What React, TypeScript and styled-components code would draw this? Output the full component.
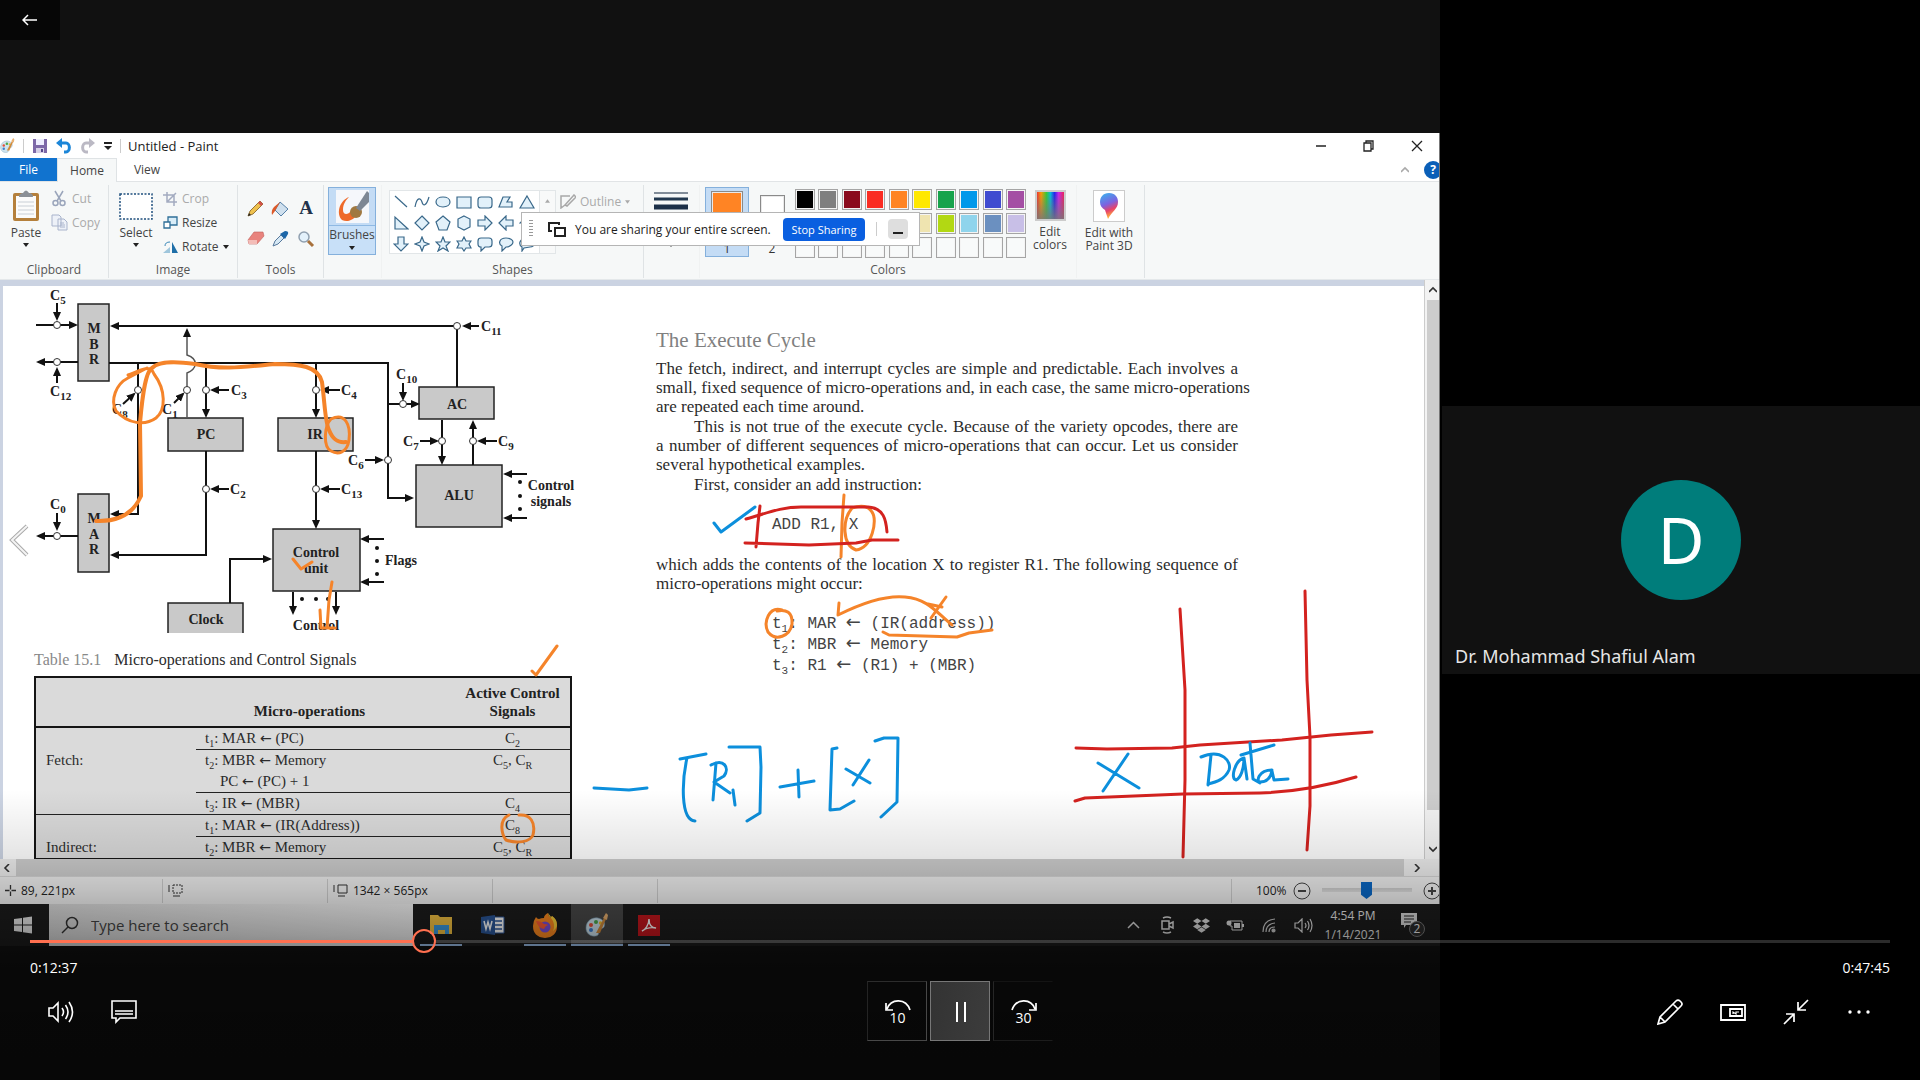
import React, { useState } from "react";
import styled, { createGlobalStyle } from "styled-components";
import { FaDropbox } from "react-icons/fa";

const UI = `"Open Sans", "Noto Sans", sans-serif`;
const SERIF = `"Liberation Serif", serif`;
const MONO = `"Liberation Mono", monospace`;
const ORANGE = "#f5842a";
const RED = "#d3221f";
const BLUE = "#0c8fdc";

const Global = createGlobalStyle`
  * { box-sizing: border-box; }
  body { margin: 0; background: #000; font-family: ${UI}; }
  button, input { font: inherit; color: inherit; }
  button { border: 0; padding: 0; background: none; cursor: pointer; }
  svg { display: block; }
`;

/* ---------- player shell ---------- */
const Player = styled.main`
  position: relative;
  min-height: 100vh;
  display: grid;
  grid-template-columns: 3fr 1fr;
  background: #000;
  overflow: hidden;
`;
const Share = styled.section`
  display: flex;
  flex-direction: column;
  justify-content: center;
  padding-bottom: 1px;
  background: #111;
  min-width: 0;
`;
const People = styled.aside`
  display: flex;
  align-items: center;
  padding-left: 2px;
`;
const Tile = styled.div`
  position: relative;
  width: 100%;
  aspect-ratio: 16 / 9;
  display: grid;
  place-items: center;
  background: #111;
`;
const Avatar = styled.div`
  width: 120px;
  height: 120px;
  border-radius: 50%;
  display: grid;
  place-items: center;
  background: #007d7b;
  color: #fff;
  font: 400 64px/120px "Noto Sans", sans-serif;
`;
const Person = styled.div`
  position: absolute;
  left: 13px;
  bottom: 4px;
  color: #e6e6e6;
  font: 18px/28px "Noto Sans", sans-serif;
`;
const Back = styled.button`
  position: absolute;
  left: 0;
  top: 0;
  width: 60px;
  height: 40px;
  display: grid;
  place-items: center;
  background: #060606;
  color: #fff;
`;

/* ---------- paint window ---------- */
const Paint = styled.div`
  position: relative;
  background: #fff;
  color: #333;
  font-size: 12px;
  border-right: 1px solid #777;
`;
const TitleBar = styled.header`
  height: 25px;
  display: flex;
  align-items: center;
  color: #222;
  font-size: 13px;
`;
const Quick = styled.div`
  display: flex;
  align-items: center;
  gap: 8px;
  margin-right: 7px;
`;
const Rule = styled.i`
  width: 1px;
  height: 14px;
  background: #ccc;
`;
const WindowButtons = styled.div`
  margin: 0 -2px 0 auto;
  display: flex;
  button { width: 48px; height: 25px; display: grid; place-items: center; }
`;
const Tabs = styled.nav`
  height: 24px;
  display: flex;
  align-items: stretch;
  border-bottom: 1px solid #e1e4e6;
`;
const Tab = styled.button<{ $kind?: "file" | "on" }>`
  width: ${(p) => (p.$kind === "file" ? 57 : 60)}px;
  color: ${(p) => (p.$kind === "file" ? "#fff" : "#444")};
  background: ${(p) => (p.$kind === "file" ? "#1173cf" : p.$kind === "on" ? "#f6f8f8" : "none")};
  border: ${(p) => (p.$kind === "on" ? "1px solid #dfe3e5" : "0")};
  border-bottom: 0;
  margin-bottom: ${(p) => (p.$kind === "on" ? "-1px" : "0")};
  font-size: 12px;
`;
const TabTail = styled.div`
  margin-left: auto;
  display: flex;
  align-items: center;
  gap: 15px;
  overflow: hidden;
`;
const Help = styled.button`
  width: 18px;
  height: 18px;
  margin-right: -3px;
  border-radius: 50%;
  background: #0a5fb8;
  color: #fff;
  font-weight: 700;
  font-size: 12px;
  line-height: 18px;
`;
const Ribbon = styled.div`
  height: 98px;
  display: flex;
  background: #f6f8f8;
  border-bottom: 1px solid #e4e8ea;
`;
const Group = styled.section<{ $w: number; $line?: boolean }>`
  width: ${(p) => p.$w}px;
  height: 93px;
  margin-top: 3px;
  padding-top: 2px;
  display: flex;
  flex-direction: column;
  justify-content: space-between;
  align-items: center;
  border-right: 1px solid ${(p) => (p.$line === false ? "#f0f2f2" : "#dfe3e5")};
  flex: none;
`;
const GroupBody = styled.div<{ $gap?: number; $pad?: string }>`
  width: 100%;
  display: flex;
  align-items: flex-start;
  gap: ${(p) => p.$gap ?? 4}px;
  padding: ${(p) => p.$pad ?? "0"};
`;
const GroupName = styled.h2`
  margin: 0;
  font-size: 12px;
  font-weight: 400;
  line-height: 16px;
  color: #555;
`;
const Big = styled.button<{ $on?: boolean; $w?: number }>`
  width: ${(p) => p.$w ?? 48}px;
  height: 68px;
  padding-top: 3px;
  display: flex;
  flex-direction: column;
  align-items: center;
  line-height: 13px;
  gap: ${(p) => (p.$on ? 5 : 4)}px;
  color: #444;
  background: ${(p) => (p.$on ? "linear-gradient(#c4dcf5 38px, #8fb9e3 38px, #8fb9e3 39px, #c8e0f8 39px)" : "none")};
  box-shadow: ${(p) => (p.$on ? "inset 0 0 0 1px #84b0dc" : "none")};
  flex: none;
`;
const Stack = styled.div`
  display: flex;
  flex-direction: column;
  gap: 1px;
`;
const Small = styled.button<{ $off?: boolean }>`
  height: 23px;
  display: flex;
  align-items: center;
  gap: 4px;
  color: ${(p) => (p.$off ? "#aaa" : "#444")};
  white-space: nowrap;
`;
const ToolGrid = styled.div`
  display: grid;
  grid-template-columns: repeat(3, 25px);
  grid-auto-rows: 30px;
  place-items: center;
  svg { overflow: visible; }
`;
const Gallery = styled.div`
  display: flex;
  height: 64px;
  background: #fff;
  border: 1px solid #e2e6e8;
`;
const ShapeGrid = styled.div`
  display: grid;
  grid-template-columns: repeat(7, 21px);
  grid-auto-rows: 21px;
  place-items: center;
  padding-right: 2px;
  border-right: 1px solid #e2e6e8;
`;
const GalleryMore = styled.div`
  width: 15px;
  padding-top: 8px;
  display: flex;
  justify-content: center;
  background: #f8f9f9;
`;
const ColorButton = styled.button<{ $on?: boolean }>`
  width: ${(p) => (p.$on ? 44 : 30)}px;
  height: 70px;
  padding: 4px 0 0;
  display: flex;
  flex-direction: column;
  align-items: center;
  justify-content: space-between;
  background: ${(p) => (p.$on ? "#c4dcf5" : "none")};
  box-shadow: ${(p) => (p.$on ? "inset 0 0 0 1px #84b0dc" : "none")};
`;
const ColorChip = styled.i<{ $c: string; $s: number }>`
  width: ${(p) => p.$s}px;
  height: ${(p) => p.$s}px;
  margin-top: ${(p) => (p.$s < 30 ? 4 : 0)}px;
  background: ${(p) => p.$c};
  border: 1px solid #8a8a8a;
  box-shadow: inset 0 0 0 1px #e9e9e9;
`;
const Palette = styled.div`
  width: 231px;
  display: grid;
  grid-template-columns: repeat(10, 20px);
  justify-content: space-between;
  row-gap: 3px;
  padding-top: 2px;
`;
const Swatch = styled.button<{ $c: string }>`
  height: 21px;
  background: ${(p) => p.$c};
  border: 1px solid #a5a5a5;
  box-shadow: inset 0 0 0 1px #f4f4f4;
`;
const Spectrum = styled.i`
  width: 31px;
  height: 31px;
  border: 2px solid #ccc;
  background: linear-gradient(transparent, #777d),
    linear-gradient(90deg, #e33, #f90 15%, #3c3 35%, #0bd 50%, #22e 65%, #c2e 80%, #e25);
`;
const Banner = styled.div`
  position: absolute;
  left: 521px;
  top: 79px;
  width: 399px;
  height: 34px;
  display: flex;
  align-items: center;
  padding: 0 11px 0 7px;
  background: #fff;
  border: 1px solid #b5b5b5;
  color: #1c1c1c;
  font-weight: 500;
`;
const Grip = styled.i`
  width: 4px;
  height: 18px;
  margin-right: 15px;
  background: repeating-linear-gradient(#999 0 1px, transparent 1px 3px);
`;
const BannerText = styled.span`
  flex: 1;
  margin-left: 9px;
  font-size: 12px;
  white-space: nowrap;
`;
const Stop = styled.button`
  width: 82px;
  height: 23px;
  border-radius: 4px;
  background: #0a5fe0;
  color: #fff;
  font-size: 11px;
  margin-right: 11px;
`;
const MiniBtn = styled.button`
  width: 20px;
  height: 20px;
  margin-left: 11px;
  border-radius: 4px;
  background: #dedede;
  display: grid;
  place-items: center;
`;

/* ---------- canvas ---------- */
const Workspace = styled.div`
  height: 579px;
  display: flex;
  background: #cbd3e2;
`;
const Sheet = styled.div`
  position: relative;
  flex: 1;
  min-width: 0;
  margin: 6px 0 0 3px;
  display: flex;
  background: #fff;
  overflow: hidden;
`;
const Figures = styled.div`
  width: 597px;
  flex: none;
`;
const Prose = styled.article`
  width: 582px;
  margin-left: 56px;
  padding-top: 42px;
  flex: none;
  font: 17px/19px ${SERIF};
  color: #2b2b2b;
  h3 { margin: 0 0 7px; font-size: 21px; line-height: 24px; font-weight: 400; color: #808080; }
  p { margin: 0 0 1px; }
`;
const Line = styled.span<{ $indent?: boolean; $last?: boolean }>`
  display: block;
  white-space: nowrap;
  padding-left: ${(p) => (p.$indent ? 38 : 0)}px;
  text-align-last: ${(p) => (p.$last ? "left" : "justify")};
`;
const Code = styled.pre`
  margin: 0;
  padding: 20px 0 19px 116px;
  font: 16px/21px ${MONO};
  color: #444;
  sub { font-size: 11px; line-height: 0; }
`;
const LeftArrow = styled.span<{ $s: number }>`
  font: ${(p) => p.$s}px/1px "DejaVu Sans", sans-serif;
`;
const Table = styled.table`
  width: 538px;
  margin-left: 31px;
  border-collapse: collapse;
  table-layout: fixed;
  background: #dadada;
  border: 2px solid #151515;
  font: 15px/21px ${SERIF};
  color: #2b2b2b;
  caption { text-align: left; font-size: 16px; line-height: 24px; padding-bottom: 4px; margin-top: 15px; }
  caption b { color: #888; margin-right: 9px; font-weight: 400; }
  sub { font-size: 10px; line-height: 0; }
  th { vertical-align: bottom; line-height: 18px; padding: 6px 0; height: 48px; border-bottom: 2px solid #151515; color: #222; }
  th:nth-child(2) { padding-right: 32px; }
  td { padding: 0; height: 21px; white-space: pre; }
  td:first-child { padding-left: 10px; }
`;
const Cell = styled.td<{ $line?: boolean; $mid?: boolean }>`
  && { padding-left: ${(p) => (p.$mid ? 0 : 9)}px; }
  text-align: ${(p) => (p.$mid ? "center" : "left")};
  border-bottom: ${(p) => (p.$line ? "1px solid #222" : "0")};
`;
const Ink = styled.svg`
  position: absolute;
  left: 0;
  top: 0;
  fill: none;
  stroke-width: 3;
  stroke-linecap: round;
  stroke-linejoin: round;
`;
const VScroll = styled.div`
  width: 15px;
  display: flex;
  flex-direction: column;
  align-items: center;
  justify-content: space-between;
  padding: 6px 0 6px 2px;
  background: #f3f3f3;
  border-left: 1px solid #ccc;
`;
const VThumb = styled.i`
  width: 12px;
  flex: 1;
  margin: 6px 0 35px;
  background: #cdcdcd;
`;
const HScroll = styled.div`
  height: 17px;
  display: flex;
  align-items: center;
  justify-content: space-between;
  gap: 5px;
  padding: 0 18px 0 3px;
  background: #ededed;
`;
const HThumb = styled.i`
  flex: 1;
  height: 17px;
  margin-right: 4px;
  background: #cdcdcd;
`;
const Status = styled.footer`
  height: 28px;
  display: flex;
  align-items: center;
  background: #efefef;
  border-top: 1px solid #d5d5d5;
  color: #222;
`;
const StatusCell = styled.div<{ $w?: number }>`
  width: ${(p) => (p.$w ? p.$w + "px" : "auto")};
  flex: ${(p) => (p.$w ? "none" : 1)};
  height: 24px;
  padding-left: 5px;
  display: flex;
  align-items: center;
  gap: 5px;
  border-right: 1px solid #ccc;
`;
const Zoom = styled.div`
  width: 207px;
  padding-left: 24px;
  display: flex;
  align-items: center;
  gap: 6px;
  overflow: hidden;
  svg { flex: none; }
  input {
    appearance: none; width: 90px; height: 17px; margin: 0 5px; background: linear-gradient(transparent 6px, #ccc 6px, #ddd 10px, transparent 10px); flex: none;
  }
  input::-webkit-slider-thumb {
    appearance: none; width: 11px; height: 17px; background: #0a66c2;
    clip-path: polygon(0 0, 100% 0, 100% 75%, 50% 100%, 0 75%);
  }
`;

/* ---------- taskbar ---------- */
const Taskbar = styled.div`
  height: 42px;
  display: flex;
  align-items: stretch;
  background: #1c1c1c;
  color: #e8e8e8;
`;
const Start = styled.button`
  width: 49px;
  padding-right: 3px;
  display: grid;
  place-items: center;
`;
const Search = styled.label`
  width: 364px;
  margin-right: 2px;
  display: flex;
  align-items: center;
  gap: 12px;
  padding-left: 12px;
  background: linear-gradient(90deg, #d8d8d8, #f4f4f4);
  color: #333;
  input { border: 0; background: none; outline: 0; width: 250px; font-size: 15px; padding: 0; }
  input::placeholder { color: #444; opacity: 1; }
`;
const AppButton = styled.button<{ $on?: boolean; $bar?: number }>`
  width: 52px;
  display: grid;
  place-items: center;
  background: ${(p) => (p.$on ? "#484848" : "none")};
  background-image: ${(p) => (p.$bar ? "linear-gradient(#9fc3ef, #9fc3ef)" : "none")};
  background-size: ${(p) => p.$bar ?? 0}px 2px;
  background-position: 50% 100%;
  background-repeat: no-repeat;
`;
const Tray = styled.div`
  margin-left: auto;
  display: flex;
  align-items: center;
  padding-right: 14px;
`;
const TrayIcon = styled.button`
  width: 34px;
  display: grid;
  place-items: center;
`;
const Clock = styled.div`
  width: 66px;
  text-align: center;
  font-size: 12px;
  line-height: 19px;
  margin-right: 14px;
`;

/* ---------- player controls ---------- */
const Shade = styled.div`
  position: absolute;
  left: 0;
  right: 0;
  bottom: 0;
  height: 290px;
  display: flex;
  flex-direction: column;
  justify-content: flex-end;
  padding: 0 30px 39px;
  color: #fff;
  background: linear-gradient(#0000, #0000001a 65px, #0003 100px, #0000005c 145px, #0008 180px, #0009);
`;
const Seek = styled.input<{ $at: number }>`
  appearance: none;
  width: 100%;
  height: 24px;
  margin: 0;
  background: linear-gradient(
      90deg,
      #ff7050 calc(${(p) => p.$at}% - 5px),
      transparent calc(${(p) => p.$at}% - 5px) calc(${(p) => p.$at}% + 17px),
      #ffffff2b calc(${(p) => p.$at}% + 17px)
    )
    0 50% / 100% 3px no-repeat;
  &::-webkit-slider-thumb {
    appearance: none;
    width: 24px;
    height: 24px;
    border: 2px solid #ff7050;
    border-radius: 50%;
    background: transparent;
  }
`;
const Times = styled.div`
  display: flex;
  justify-content: space-between;
  font-size: 14px;
  line-height: 20px;
  padding: 5px 0 3px;
`;
const Controls = styled.div`
  display: grid;
  grid-template-columns: 1fr auto 1fr;
`;
const Bar = styled.div<{ $end?: boolean }>`
  display: flex;
  gap: 3px;
  padding: ${(p) => (p.$end ? "0 2px 0 0" : "0")};
  justify-content: ${(p) => (p.$end ? "flex-end" : "flex-start")};
`;
const Ctl = styled.button<{ $look?: "edge" | "on" | "fade" }>`
  width: 60px;
  height: 60px;
  padding: 2px 0 0 1px;
  display: grid;
  place-items: center;
  color: #fff;
  font-size: 14px;
  border: 1px solid transparent;
  border-color: ${(p) => (p.$look === "on" ? "#777" : p.$look === "edge" ? "#2c2c2c #484848 #484848 #242424" : p.$look === "fade" ? "#141414 transparent #1c1c1c #262626" : "transparent")};
  background: ${(p) => (p.$look === "on" ? "linear-gradient(100deg, #333, #3c3c3c)" : "none")};
`;
const SkipText = styled.span`
  display: flex;
  flex-direction: column;
  align-items: center;
  line-height: 14px;
`;
const PrevMark = styled.svg`
  position: absolute;
  left: 9px;
  top: 391px;
`;

/* ---------- small icons ---------- */
const Caret = ({ c = "#222", s = 6 }: { c?: string; s?: number }) => (
  <svg width={s} height="4" viewBox="0 0 6 4"><path d="M0 0h6L3 4z" fill={c} /></svg>
);
const Chev = ({ d, c = "#333", s = 8 }: { d: string; c?: string; s?: number }) => (
  <svg width={s} height={s} viewBox="0 0 8 8"><path d={d} fill="none" stroke={c} strokeWidth="1.6" /></svg>
);
const PaletteIcon = ({ s = 24 }: { s?: number }) => (
  <svg width={s} height={s} viewBox="0 0 24 24">
    <path d="M1 15C1 8 7 4 13 5c5 1 8 5 6 9-1 2-4 1-5 3s1 5-3 6C5 24 1 20 1 15z" fill="#cfe3ee" stroke="#7aa0b8" strokeWidth=".6" />
    <circle cx="6" cy="12" r="2" fill="#e5503a" /><circle cx="11" cy="9" r="2" fill="#4aa84e" />
    <circle cx="15.500" cy="10" r="1.700" fill="#f0c030" /><circle cx="6" cy="17" r="2" fill="#3f7fd0" />
    <path d="M11 20 19 5l2 1-6 14z" fill="#d08a3c" /><path d="M18 5l3-5 2 2-1 5z" fill="#e8b070" />
  </svg>
);

const shapes = [
  "M2 2 14 13", "M1 13C3 2 7 4 8 8s4 5 7-5", "M8 3c4 0 7 2 7 5s-3 5-7 5-7-2-7-5 3-5 7-5z", "M1 3h14v11H1z",
  "M4 3h8q3 0 3 3v5q0 3-3 3H4q-3 0-3-3V6q0-3 3-3z", "M5 3h7L9 8h5v5H1z", "M8 2l7 12H1z",
  "M2 2v12h13z", "M8 1l7 7-7 7-7-7z", "M8 1l7 6-3 8H4L1 7z", "M8 1l6 3v8l-6 3-6-3V4z",
  "M1 5h7V1l7 7-7 7v-4H1z", "M15 5H8V1L1 8l7 7v-4h7z", "M5 15V8H1l7-7 7 7h-4v7z",
  "M5 1v7H1l7 7 7-7h-4V1z", "M8 1l2 5 5 2-5 2-2 5-2-5-5-2 5-2z", "M8 1l2 5h5l-4 4 2 5-5-3-5 3 2-5-4-4h5z",
  "M8 1l2 4h5l-2 3 2 4h-5l-2 3-2-3H1l2-4-2-3h5z", "M4 2h8q3 0 3 3v3q0 3-3 3H8l-4 4v-4q-3 0-3-3V5q0-3 3-3z",
  "M8 2c4 0 7 2 7 4s-3 5-7 5l-4 4v-5C0 8 1 2 8 2z", "M5 3q3-3 6 0 4 0 4 4t-4 4l-6 1-2 3v-4Q0 9 1 6t4-3z",
];
const row1 = ["#000", "#7f7f7f", "#8a0a1c", "#fa2c22", "#ff8424", "#ffe800", "#16a34c", "#0098ea", "#3f4bd0", "#a44ea4"];
const row2 = ["#fff", "#c3c3c3", "#b97a57", "#ffaec9", "#ffc90e", "#efe4b0", "#b2d813", "#8fd4ec", "#6b90c0", "#c8bfe7"];
const row3 = Array(10).fill("#f8fafa");

/* ---------- CPU data path figure ---------- */
const Sub = ({ x, y, n, c = "#222" }: { x: number; y: number; n: string; c?: string }) => (
  <text x={x} y={y + 5} fontSize="14" fill={c}>C<tspan dy="4" fontSize="11">{n}</tspan></text>
);
const boxes: [number, number, number, number][] = [
  [78, 304, 31, 77], [168, 418, 75, 33], [278, 418, 75, 33], [419, 387, 75, 32],
  [416, 465, 86, 62], [273, 529, 87, 62], [78, 494, 31, 78],
];
const wires = [
  "M36 325H76", "M78 362H38", "M457 326H112", "M109 363H388V498H412",
  "M388 404H418", "M138 363V514H112", "M206 363V416", "M206 451V555H112", "M316 363V416", "M316 451V527",
  "M442 420V463", "M473 465V422", "M230 603V559H270", "M293 592V613", "M336 592V613", "M78 536H38",
];
const pointers = [
  "M57 303V319", "M57 383V369", "M479 326H464", "M403 383V399", "M365 460H382", "M123 404 134 394",
  "M174 403 183 394", "M229 390H212", "M229 489H212", "M340 390H322", "M340 489H322", "M420 441H437",
  "M497 441H479", "M527 474H505", "M527 518H505", "M384 539H362", "M384 582H362", "M57 513V529",
];
const nodes: [number, number][] = [
  [57, 325], [57, 362], [457, 326], [403, 404], [388, 460], [138, 390], [187, 390], [206, 390], [206, 489],
  [316, 390], [316, 489], [442, 441], [473, 441], [57, 536],
];
const dots: [number, number][] = [
  [520, 482], [520, 496], [520, 509], [377, 548], [377, 561], [377, 574], [302, 599], [316, 599], [328, 599],
];
const Figure = () => (
  <svg width="597" height="347" viewBox="3 286 597 347" fontFamily={SERIF} fontWeight="700" role="img" aria-label="Data paths and control signals">
    <defs>
      <marker id="tip" markerUnits="userSpaceOnUse" markerWidth="9" markerHeight="8" refX="7" refY="4" orient="auto">
        <path d="M0 0 9 4 0 8z" fill="#111" />
      </marker>
    </defs>
    {boxes.map((b) => <rect key={b.join()} x={b[0]} y={b[1]} width={b[2]} height={b[3]} fill="#c9c9c9" stroke="#222" strokeWidth="1.5" />)}
    <path d="M168 634V603H243V634" fill="#c9c9c9" stroke="#222" strokeWidth="1.5" />
    <path d="M187 418V373C197 369 199 359 187 355V330" fill="none" stroke="#555" strokeWidth="1.5" markerEnd="url(#tip)" />
    <path d="M457 329V387" stroke="#111" strokeWidth="2" />
    {wires.map((d) => <path key={d} d={d} fill="none" stroke="#111" strokeWidth="2" markerEnd="url(#tip)" />)}
    {pointers.map((d) => <path key={d} d={d} stroke="#111" strokeWidth="2" markerEnd="url(#tip)" />)}
    {nodes.map((n) => <circle key={n.join()} cx={n[0]} cy={n[1]} r="3.500" fill="#fff" stroke="#333" />)}
    {dots.map((n) => <circle key={n.join()} cx={n[0]} cy={n[1]} r="2" fill="#111" />)}
    <Sub x={50} y={295} n="5" /><Sub x={50} y={391} n="12" /><Sub x={481} y={326} n="11" />
    <Sub x={396} y={374} n="10" /><Sub x={348} y={460} n="6" /><Sub x={112} y={409} n="8" />
    <Sub x={162} y={409} n="1" /><Sub x={231} y={390} n="3" /><Sub x={230} y={489} n="2" />
    <Sub x={341} y={390} n="4" /><Sub x={341} y={489} n="13" /><Sub x={403} y={441} n="7" />
    <Sub x={498} y={441} n="9" /><Sub x={50} y={504} n="0" />
    <g fontSize="14" fill="#222" textAnchor="middle">
      <text x="94" y="333">M</text><text x="94" y="349">B</text><text x="94" y="364">R</text>
      <text x="94" y="523">M</text><text x="94" y="539">A</text><text x="94" y="554">R</text>
      <text x="206" y="439">PC</text><text x="315" y="439">IR</text><text x="457" y="409">AC</text>
      <text x="459" y="500">ALU</text><text x="316" y="557">Control</text><text x="316" y="573">unit</text>
      <text x="206" y="624">Clock</text><text x="316" y="630">Control</text>
      <text x="401" y="565">Flags</text><text x="551" y="490">Control</text><text x="551" y="506">signals</text>
    </g>
  </svg>
);

const Handwriting = () => (
  <Ink width="1421" height="573" viewBox="3 286 1421 573" aria-hidden="true">
    <g stroke={ORANGE}>
      <path d="M96 521C120 522 134 512 141 496L140 423C142 400 145 372 152 368 160 360 180 362 195 364 225 371 250 366 275 364 300 364 318 366 322 382 325 405 325 422 329 430 333 440 338 443 346 442" strokeWidth="4" />
      <path d="M128 375C142 370 150 364 154 374 166 390 166 410 156 418 145 426 128 424 116 411 110 400 116 384 128 378L147 368" />
      <path d="M331 419C345 412 351 425 349 440 347 453 338 455 331 451 323 447 324 426 331 419z" />
      <path d="M293 559 301 569 312 562M332 582 329 600 327 628M320 610 321 628H335M532 671 536 675 557 646" />
      <path d="M509 815C498 820 502 835 506 840 517 844 530 842 533 835 536 822 530 814 519 815" />
      <path d="M844 495 842 523 841 557M852 508C842 520 842 545 856 550 872 548 878 520 872 512 867 504 858 506 852 508" />
      <path d="M782 610C769 606 763 622 768 632 776 642 790 636 792 624 793 612 786 609 777 611" />
      <path d="M839 603 838 615C862 603 885 595 905 597 928 599 936 612 952 625M946 597 931 618M928 604 942 607M883 632 889 635 957 637 969 633 992 630" />
    </g>
    <g stroke={RED}>
      <path d="M746 519C765 514 780 507 801 507H868C884 508 886 520 887 532M760 506 758 523 756 547M745 543 809 545 856 543 872 540H898" />
      <path d="M1180 609 1185 690V780L1183 857M1305 591 1307 680 1310 737V806L1307 850" />
      <path d="M1076 748 1107 749 1172 748 1200 745 1282 740 1331 735 1372 732M1075 801 1085 798 1183 794 1260 793C1290 792 1320 788 1356 777" />
    </g>
    <g stroke={BLUE}>
      <path d="M714 523 721 532 755 507M594 788 629 790 647 788M706 754 680 759M687 758C682 780 680 820 695 821" />
      <path d="M716 763 713 800M711 765C724 758 730 768 724 776L714 782 730 793M733 790 735 805M729 747H760L761 767 760 813 747 821" />
      <path d="M780 787 814 781M798 770 799 797M837 748 832 749 830 810 840 809 854 801M846 769 870 783M869 760 853 785M875 741 884 738H898L897 802 881 817" />
      <path d="M1098 763 1139 788M1128 754 1103 791M1211 755 1208 785M1201 757C1222 748 1232 762 1229 770 1225 779 1217 782 1208 784" />
      <path d="M1244 758C1235 760 1230 779 1236 780 1241 778 1244 768 1244 758L1247 779M1250 743 1253 779 1260 783M1241 755 1274 745M1272 770C1258 770 1256 782 1260 782 1268 782 1271 776 1272 771L1274 780 1288 779" />
    </g>
  </Ink>
);

const Arrow = ({ s = 18 }: { s?: number }) => <> <LeftArrow $s={s}>←</LeftArrow> </>;

export default function App() {
  const [pos, setPos] = useState(20.8);
  return (
    <>
      <Global />
      <Player>
        <Share>
          <Paint>
            <TitleBar>
              <Quick>
                <PaletteIcon s={15} />
                <Rule />
                <svg width="16" height="16" viewBox="0 0 16 16"><path d="M1 1h14v14H1z" fill="#7d68a8" /><path d="M4 1h8v6H4z" fill="#eef" /><path d="M4 10h8v5H4z" fill="#d5cfe6" /><path d="M9 11h2v3H9z" fill="#554488" /></svg>
                <svg width="16" height="16" viewBox="0 0 16 16"><path d="M3 5h7a3 4 0 0 1 0 9H8" fill="none" stroke="#1c86d8" strokeWidth="3" /><path d="M0 5 6 0v10z" fill="#1c86d8" /></svg>
                <svg width="16" height="16" viewBox="0 0 16 16"><path d="M12 5H6a3 4 0 0 0 0 9h2" fill="none" stroke="#bbb9c4" strokeWidth="3" /><path d="M15 5 9 0v10z" fill="#bbb9c4" /></svg>
                <svg width="8" height="8" viewBox="0 0 8 8"><path d="M0 0h8v2H0zM0 4h8L4 8z" fill="#222" /></svg>
                <Rule />
              </Quick>
              <span>Untitled - Paint</span>
              <WindowButtons>
                <button aria-label="Minimize"><svg width="10" height="2"><path d="M0 1h10" stroke="#222" strokeWidth="1.500" /></svg></button>
                <button aria-label="Restore"><svg width="12" height="12" viewBox="0 0 12 12" fill="none" stroke="#222" strokeWidth="1.300"><path d="M1 3h7v8H1zM3 3V1h7v8H8" /></svg></button>
                <button aria-label="Close"><svg width="12" height="12" viewBox="0 0 12 12"><path d="M1 1l10 10M11 1 1 11" stroke="#222" strokeWidth="1.300" /></svg></button>
              </WindowButtons>
            </TitleBar>
            <Tabs>
              <Tab $kind="file">File</Tab>
              <Tab $kind="on">Home</Tab>
              <Tab>View</Tab>
              <TabTail><Chev d="M0 6 4 2 8 6" c="#aaa" /><Help aria-label="Help">?</Help></TabTail>
            </Tabs>
            <Ribbon>
              <Group $w={109}>
                <GroupBody $gap={1} $pad="0 0 0 2px">
                  <Big>
                    <svg width="28" height="32" viewBox="0 0 28 32"><rect x="1" y="3" width="26" height="28" rx="2" fill="#b5803c" /><rect x="4" y="6" width="20" height="22" fill="#fbfbfb" /><path d="M6 12h16M6 16h16M6 20h16M6 24h16" stroke="#c9cfd6" /><path d="M7 7q0-4 4-4 3-5 6 0 4 0 4 4z" fill="#8b9097" /></svg>
                    Paste<Caret />
                  </Big>
                  <Stack>
                    <Small $off><svg width="17" height="17" viewBox="0 0 17 17" fill="none" stroke="#9aa5bb" strokeWidth="1.500"><path d="M4 1l6 10M12 1 6 11" /><circle cx="4.500" cy="13" r="2.500" /><circle cx="11.500" cy="13" r="2.500" /></svg>Cut</Small>
                    <Small $off><svg width="17" height="17" viewBox="0 0 17 17" fill="#edf1f8" stroke="#a9b4cc"><path d="M1 1h7l2 2v9H1zM7 5h6l3 3v8H7z" /><path d="M9 9h4M9 11h5M9 13h5" /></svg>Copy</Small>
                  </Stack>
                </GroupBody>
                <GroupName>Clipboard</GroupName>
              </Group>
              <Group $w={129}>
                <GroupBody $gap={3} $pad="0 0 0 3px">
                  <Big>
                    <svg width="34" height="32" viewBox="0 0 34 32"><rect x="1" y="4" width="32" height="25" fill="#fff" stroke="#1f4f7d" strokeWidth="1.500" strokeDasharray="2 1.500" /></svg>
                    Select<Caret />
                  </Big>
                  <Stack>
                    <Small $off><svg width="15" height="14" viewBox="0 0 15 14" fill="none" stroke="#a3abc0" strokeWidth="1.500"><path d="M4 0v10h10M0 3h11v11M4 10 13 1" /></svg>Crop</Small>
                    <Small><svg width="15" height="14" viewBox="0 0 15 14" stroke="#2f6f98" strokeWidth="1.300"><path d="M5 1h9v8H5z" fill="#d9edf8" /><path d="M1 6h6v6H1z" fill="#fff" /></svg>Resize</Small>
                    <Small><svg width="15" height="14" viewBox="0 0 15 14"><path d="M0 13h7V7z" fill="#9fc6dc" /><path d="M9 13h6L9 2z" fill="#1f6fa8" /><path d="M2 6q0-4 5-4" stroke="#3a88b8" fill="none" /></svg>Rotate<Caret /></Small>
                  </Stack>
                </GroupBody>
                <GroupName>Image</GroupName>
              </Group>
              <Group $w={86}>
                <GroupBody $pad="6px 0 0 5px">
                  <ToolGrid>
                    <svg width="17" height="17" viewBox="0 0 17 17"><path d="M1 16l2-5L13 1l3 3L6 14z" fill="#eec14e" stroke="#7d5a20" strokeWidth=".8" /><path d="M13 1l3 3-2 2-3-3z" fill="#d0504a" /><path d="M1 16l1-3 2 2z" fill="#222" /></svg>
                    <svg width="19" height="17" viewBox="0 0 19 17"><path d="M9 2 17 9l-7 7-6-6z" fill="#cfe0ee" stroke="#5580a8" /><path d="M9 2l-6 5q-3 3-2 8l3-4z" fill="#dd5a2a" /></svg>
                    <svg width="18" height="22" viewBox="0 0 18 22"><text x="9" y="17" textAnchor="middle" fontFamily={SERIF} fontWeight="700" fontSize="19" fill="#22324a">A</text></svg>
                    <svg width="18" height="14" viewBox="0 0 18 14"><path d="M7 1l9 0 1 4-7 8H2L1 9z" fill="#e8837d" stroke="#c0605a" strokeWidth=".6" /><path d="M1 9l9 0 0 4H2z" fill="#f3bdb8" /></svg>
                    <svg width="17" height="17" viewBox="0 0 17 17"><path d="M1 16l2-5 6-6 3 3-6 6z" fill="#d6e8f4" stroke="#56789c" /><path d="M8 4l5-3q4 0 3 3l-3 5z" fill="#1d67a8" /></svg>
                    <svg width="17" height="17" viewBox="0 0 17 17"><circle cx="7" cy="7" r="5" fill="#e3f1fb" stroke="#90a0b0" strokeWidth="1.500" /><path d="M11 11l5 5" stroke="#a8713c" strokeWidth="3" /></svg>
                  </ToolGrid>
                </GroupBody>
                <GroupName>Tools</GroupName>
              </Group>
              <Group $w={58} $line={false}>
                <GroupBody $pad="0 0 0 4px">
                  <Big $on>
                    <svg width="33" height="33" viewBox="0 0 33 33"><rect width="33" height="33" fill="#f5f7fb" /><path d="M13 7C3 11 0 24 6 30c6 3 13-1 15-6l-6-3c-3 4-8 4-8-1 0-6 3-10 6-13z" fill="#ee6a2a" /><ellipse cx="20" cy="22" rx="6" ry="6" fill="#a07840" /><path d="M20 18 31 1l2 2v9l-9 9z" fill="#7d8794" /></svg>
                    Brushes<Caret />
                  </Big>
                </GroupBody>
              </Group>
              <Group $w={262}>
                <GroupBody $pad="3px 0 0 7px">
                  <Gallery>
                    <ShapeGrid>
                      {shapes.map((d) => <svg key={d} width="16" height="16" viewBox="0 0 16 16"><path d={d} fill={d === shapes[0] || d === shapes[1] ? "none" : "#e2f1fa"} stroke="#39688a" strokeWidth="1.200" /></svg>)}
                    </ShapeGrid>
                    <GalleryMore><svg width="5" height="4" viewBox="0 0 6 4"><path d="M0 4h6L3 0z" fill="#aaa" /></svg></GalleryMore>
                  </Gallery>
                  <Small $off><svg width="16" height="15" viewBox="0 0 16 15" fill="none" stroke="#a8a8a8" strokeWidth="1.500"><path d="M10 2H1v12l4-3M5 11 14 1l2 2-9 9z" /></svg>Outline<Caret c="#aaa" s={5} /></Small>
                </GroupBody>
                <GroupName>Shapes</GroupName>
              </Group>
              <Group $w={56} $line={false}>
                <GroupBody $pad="0 0 0 3px">
                  <Big>
                    <svg width="34" height="49" viewBox="0 0 34 49"><path d="M0 3h34" stroke="#5a6878" strokeWidth="1.500" /><path d="M0 9h34" stroke="#22384f" strokeWidth="3" /><path d="M0 17h34" stroke="#1c3048" strokeWidth="5" /></svg>
                    <Caret />
                  </Big>
                </GroupBody>
              </Group>
              <Group $w={377} $line={false}>
                <GroupBody $gap={8} $pad="0 0 0 5px">
                  <ColorButton $on aria-label="Color 1"><ColorChip $c="#ff8424" $s={32} />1</ColorButton>
                  <ColorButton aria-label="Color 2"><ColorChip $c="#fff" $s={25} />2</ColorButton>
                  <Palette>
                    {[...row1, ...row2, ...row3].map((c, i) => <Swatch key={i} $c={c} aria-label={`Swatch ${i + 1}`} />)}
                  </Palette>
                  <Big $w={32}><Spectrum />Edit colors</Big>
                </GroupBody>
                <GroupName>Colors</GroupName>
              </Group>
              <Group $w={68}>
                <GroupBody $pad="0 0 0 2px">
                  <Big $w={60}>
                    <svg width="32" height="32" viewBox="0 0 32 32"><defs><linearGradient id="p3" x1="0" y1="0" x2=".3" y2="1"><stop offset="0" stopColor="#35b8f0" /><stop offset=".5" stopColor="#7d62e0" /><stop offset=".75" stopColor="#e8426a" /><stop offset="1" stopColor="#ffb43a" /></linearGradient></defs><rect x=".5" y=".5" width="31" height="31" fill="#fff" stroke="#ccc" /><path d="M16 3c6 0 9 4 9 9 0 7-6 9-10 17l-3-9c-3-2-5-4-5-8 0-5 3-9 9-9z" fill="url(#p3)" /></svg>
                    Edit with Paint 3D
                  </Big>
                </GroupBody>
              </Group>
            </Ribbon>
            <Banner>
              <Grip />
              <svg width="18" height="15" viewBox="0 0 18 15" fill="none" stroke="#222" strokeWidth="2"><path d="M4 9H1V1h10v2M7 6h10v8H7z" /></svg>
              <BannerText>You are sharing your entire screen.</BannerText>
              <Stop>Stop Sharing</Stop>
              <Rule />
              <MiniBtn aria-label="Hide"><svg width="10" height="10"><path d="M0 9h10" stroke="#222" strokeWidth="2" /></svg></MiniBtn>
            </Banner>
            <Workspace>
              <Sheet>
                <Figures>
                  <Figure />
                  <Table>
                    <caption><b>Table 15.1</b> Micro-operations and Control Signals</caption>
                    <colgroup><col width="161" /><col width="259" /><col width="116" /></colgroup>
                    <thead><tr><th /><th>Micro-operations</th><th>Active Control Signals</th></tr></thead>
                    <tbody>
                      <tr><td /><Cell $line>t<sub>1</sub>: MAR<Arrow s={14} />(PC)</Cell><Cell $mid $line>C<sub>2</sub></Cell></tr>
                      <tr><td>Fetch:</td><Cell>t<sub>2</sub>: MBR<Arrow s={14} />Memory</Cell><Cell $mid>C<sub>5</sub>, C<sub>R</sub></Cell></tr>
                      <tr><td /><Cell $line>{"    "}PC<Arrow s={14} />(PC) + 1</Cell><Cell $mid $line /></tr>
                      <tr><Cell $line /><Cell $line>t<sub>3</sub>: IR<Arrow s={14} />(MBR)</Cell><Cell $mid $line>C<sub>4</sub></Cell></tr>
                      <tr><td /><Cell $line>t<sub>1</sub>: MAR<Arrow s={14} />(IR(Address))</Cell><Cell $mid $line>C<sub>8</sub></Cell></tr>
                      <tr><td>Indirect:</td><Cell $line>t<sub>2</sub>: MBR<Arrow s={14} />Memory</Cell><Cell $mid $line>C<sub>5</sub>, C<sub>R</sub></Cell></tr>
                    </tbody>
                  </Table>
                </Figures>
                <Prose>
                  <h3>The Execute Cycle</h3>
                  <p>
                    <Line>The fetch, indirect, and interrupt cycles are simple and predictable. Each involves a</Line>
                    <Line>small, fixed sequence of micro-operations and, in each case, the same micro-operations</Line>
                    <Line $last>are repeated each time around.</Line>
                  </p>
                  <p>
                    <Line $indent>This is not true of the execute cycle. Because of the variety opcodes, there are</Line>
                    <Line>a number of different sequences of micro-operations that can occur. Let us consider</Line>
                    <Line $last>several hypothetical examples.</Line>
                  </p>
                  <p><Line $indent $last>First, consider an add instruction:</Line></p>
                  <Code>ADD R1, X</Code>
                  <p>
                    <Line>which adds the contents of the location X to register R1. The following sequence of</Line>
                    <Line $last>micro-operations might occur:</Line>
                  </p>
                  <Code>
                    t<sub>1</sub>: MAR<Arrow />(IR(address)){"\n"}
                    t<sub>2</sub>: MBR<Arrow />Memory{"\n"}
                    t<sub>3</sub>: R1<Arrow />(R1) + (MBR)
                  </Code>
                </Prose>
                <Handwriting />
              </Sheet>
              <VScroll><Chev d="M0 6 4 2 8 6" /><VThumb /><Chev d="M0 2 4 6 8 2" /></VScroll>
            </Workspace>
            <HScroll><Chev d="M6 0 2 4 6 8" /><HThumb /><Chev d="M2 0 6 4 2 8" /></HScroll>
            <Status>
              <StatusCell $w={163}><svg width="11" height="11" viewBox="0 0 11 11"><path d="M5.500 0v11M0 5.500h11" stroke="#333" strokeWidth="1.300" strokeDasharray="4.500 2" /></svg>89, 221px</StatusCell>
              <StatusCell $w={165}><svg width="15" height="13" viewBox="0 0 15 13" fill="none" stroke="#333"><path d="M1 1v7M12 12H5" /><path d="M5 1h9v8H5z" strokeDasharray="2 1" /></svg></StatusCell>
              <StatusCell $w={165}><svg width="15" height="13" viewBox="0 0 15 13" fill="none" stroke="#333"><path d="M1 1v7M12 12H5M5 1h9v8H5z" /></svg>1342 × 565px</StatusCell>
              <StatusCell $w={165} />
              <StatusCell />
              <Zoom>
                100%
                <svg width="18" height="18" viewBox="0 0 18 18" fill="none" stroke="#444"><circle cx="9" cy="9" r="8" /><path d="M5 9h8" strokeWidth="2" /></svg>
                <input type="range" aria-label="Zoom" defaultValue={50} />
                <svg width="18" height="18" viewBox="0 0 18 18" fill="none" stroke="#444"><circle cx="9" cy="9" r="8" /><path d="M5 9h8M9 5v8" strokeWidth="2" /></svg>
              </Zoom>
            </Status>
            <PrevMark width="20" height="34" viewBox="0 0 20 34"><path d="M18 2 3 16l15 15" fill="none" stroke="#aaa" strokeWidth="4" /><path d="M18 2 3 16l15 15" fill="none" stroke="#f4f4f4" strokeWidth="2" /></PrevMark>
          </Paint>
          <Taskbar>
            <Start aria-label="Start"><svg width="18" height="18" viewBox="0 0 18 18" fill="#e8e8e8"><path d="M0 3l8-1v6.500H0zM9 1.800 18 .5v8H9zM0 9.500h8V16l-8-1zM9 9.500h9v8l-9-1.300z" /></svg></Start>
            <Search>
              <svg width="18" height="18" viewBox="0 0 18 18" fill="none" stroke="#333" strokeWidth="1.500"><circle cx="11" cy="7" r="5.500" /><path d="M7 11l-6 6" /></svg>
              <input aria-label="Search" placeholder="Type here to search" />
            </Search>
            <AppButton $bar={42} aria-label="File Explorer"><svg width="22" height="20" viewBox="0 0 22 20"><path d="M0 0h8l2 2h12v17H0z" fill="#f5c342" /><path d="M4 10h15v9h-4v-4H8v4H4z" fill="#3b9ae0" /></svg></AppButton>
            <AppButton aria-label="Word"><svg width="24" height="20" viewBox="0 0 24 20"><path d="M12 2h11v16H12z" fill="#fff" stroke="#2b579a" /><path d="M14 6h7M14 10h7M14 14h7" stroke="#2b579a" strokeWidth="1.500" /><path d="M0 2 14 0v20L0 18z" fill="#2b579a" /><path d="M3 6l2 8 2-7 2 7 2-8" fill="none" stroke="#fff" strokeWidth="1.500" /></svg></AppButton>
            <AppButton $bar={42} aria-label="Firefox"><svg width="26" height="25" viewBox="0 0 26 25"><path d="M4 4q1 2 3 2 2-1 5-1 0-3 4-5 0 3 3 5 1-1 1-2 5 4 5 10 0 11-12 12Q1 24 1 13q0-5 3-9z" fill="#ff8a1f" /><path d="M16 0q0 3 3 5 5 6 2 13 4-3 4-6 0-6-5-9l-1 1z" fill="#ffd43a" /><circle cx="13" cy="14" r="5.500" fill="#7b4fd8" /><path d="M4 8q5 0 8 3 3 0 4 1-3 1-4 4-6-1-8-8z" fill="#ff5a36" /></svg></AppButton>
            <AppButton $on $bar={52} aria-label="Paint"><PaletteIcon s={24} /></AppButton>
            <AppButton $bar={42} aria-label="Acrobat"><svg width="22" height="21" viewBox="0 0 22 21"><path d="M0 0h22v21H0z" fill="#c5161d" /><path d="M4 16c3-1 7-6 7-12 0 6 3 9 7 9-5-1-10 0-14 3z" fill="none" stroke="#fff" strokeWidth="1.400" /></svg></AppButton>
            <Tray>
              <TrayIcon aria-label="Hidden icons"><svg width="13" height="8" viewBox="0 0 13 8"><path d="M1 7l5.500-5.500L12 7" fill="none" stroke="#ddd" strokeWidth="1.500" /></svg></TrayIcon>
              <TrayIcon aria-label="Meet"><svg width="14" height="18" viewBox="0 0 14 18" fill="none" stroke="#ddd" strokeWidth="1.500"><path d="M3 2q4-2 8 0M3 16q4 2 8 0M2 5h7v8H2zM9 8l4-2v6l-4-2" /></svg></TrayIcon>
              <TrayIcon aria-label="Dropbox"><FaDropbox size={17} color="#ddd" /></TrayIcon>
              <TrayIcon aria-label="Battery"><svg width="18" height="12" viewBox="0 0 18 12"><path d="M4 2h12v9H6V7H4z" fill="none" stroke="#ddd" /><path d="M8 4h6v5H8zM16 5h2v3h-2z" fill="#ddd" /><circle cx="3" cy="4" r="2.500" fill="#ddd" /></svg></TrayIcon>
              <TrayIcon aria-label="Network"><svg width="14" height="15" viewBox="0 0 14 15" fill="none" stroke="#ccc" strokeWidth="1.200"><path d="M1 14Q1 2 13 1M4 14q0-8 9-9M7 14q0-5 6-5" /><circle cx="11.500" cy="12.500" r="1.500" fill="#ccc" /></svg></TrayIcon>
              <TrayIcon aria-label="Volume"><svg width="19" height="15" viewBox="0 0 19 15" fill="none" stroke="#ddd" strokeWidth="1.200"><path d="M1 5h3l4-4v13l-4-4H1zM11 5q2 2.500 0 5M13.500 3q3 4.500 0 9M16 1q4 6.500 0 13" /></svg></TrayIcon>
              <Clock>4:54 PM<br />1/14/2021</Clock>
              <svg width="26" height="26" viewBox="0 0 26 26"><path d="M1 1h16v12H6l-2 3v-3H1z" fill="#d8d8d8" /><path d="M4 4h10M4 7h10M4 10h7" stroke="#222" /><circle cx="17" cy="17" r="7.500" fill="#2b2b2b" stroke="#777" /><text x="17" y="21" textAnchor="middle" fontSize="12" fill="#eee">2</text></svg>
            </Tray>
          </Taskbar>
        </Share>
        <People>
          <Tile><Avatar>D</Avatar><Person>Dr. Mohammad Shafiul Alam</Person></Tile>
        </People>
        <Back aria-label="Back"><svg width="16" height="12" viewBox="0 0 16 12" fill="none" stroke="#fff" strokeWidth="1.500"><path d="M6 1 1 6l5 5M1 6h14" /></svg></Back>
        <Shade>
          <Seek type="range" aria-label="Seek" min={0} max={100} step={0.1} value={pos} $at={pos} onChange={(e) => setPos(+e.target.value)} />
          <Times><span>0:12:37</span><span>0:47:45</span></Times>
          <Controls>
            <Bar>
              <Ctl aria-label="Volume"><svg width="26" height="22" viewBox="0 0 26 22" fill="none" stroke="#fff" strokeWidth="1.600"><path d="M1 7h4l5-5v18l-5-5H1zM14 7q3 4 0 8M17.500 4q5 7 0 14M21 1q7 10 0 20" /></svg></Ctl>
              <Ctl aria-label="Subtitles"><svg width="26" height="24" viewBox="0 0 26 24" fill="none" stroke="#fff" strokeWidth="1.600"><path d="M1 1h24v17H9l-4 4v-4H1zM4 11h18M4 14h18" /></svg></Ctl>
            </Bar>
            <Bar>
              <Ctl $look="edge"><SkipText><svg width="26" height="11" viewBox="0 0 26 11" fill="none" stroke="#fff" strokeWidth="1.700"><path d="M25 10C21-2 6-2 2 9M1 3v7h7" /></svg>10</SkipText></Ctl>
              <Ctl $look="on" aria-label="Pause"><svg width="12" height="20" viewBox="0 0 12 20"><path d="M2 0v20M10 0v20" stroke="#fff" strokeWidth="2" /></svg></Ctl>
              <Ctl $look="fade"><SkipText><svg width="26" height="11" viewBox="0 0 26 11" fill="none" stroke="#fff" strokeWidth="1.700"><path d="M1 10C5-2 20-2 24 9M25 3v7h-7" /></svg>30</SkipText></Ctl>
            </Bar>
            <Bar $end>
              <Ctl aria-label="Edit"><svg width="26" height="26" viewBox="0 0 26 26" fill="none" stroke="#fff" strokeWidth="1.700"><path d="M1 25l2-7L19 2q2-2 4 0l1 1q2 2 0 4L8 23zM16 5l5 5M3 18l5 5" /></svg></Ctl>
              <Ctl aria-label="Mini view"><svg width="26" height="18" viewBox="0 0 26 18" fill="none" stroke="#fff" strokeWidth="1.800"><path d="M1 2h24v15H1z" /><path d="M10 6h12v7H10z" /><path d="M13 11v-2l3 2v-2h3" strokeWidth="1.200" /></svg></Ctl>
              <Ctl aria-label="Exit full screen"><svg width="26" height="26" viewBox="0 0 26 26" fill="none" stroke="#fff" strokeWidth="1.700"><path d="M1 25l10-10M3 15h8v8M25 1 15 11M15 3v8h8" /></svg></Ctl>
              <Ctl aria-label="More"><svg width="24" height="4" viewBox="0 0 24 4" fill="#fff"><circle cx="3" cy="2" r="1.700" /><circle cx="12" cy="2" r="1.700" /><circle cx="21" cy="2" r="1.700" /></svg></Ctl>
            </Bar>
          </Controls>
        </Shade>
      </Player>
    </>
  );
}
